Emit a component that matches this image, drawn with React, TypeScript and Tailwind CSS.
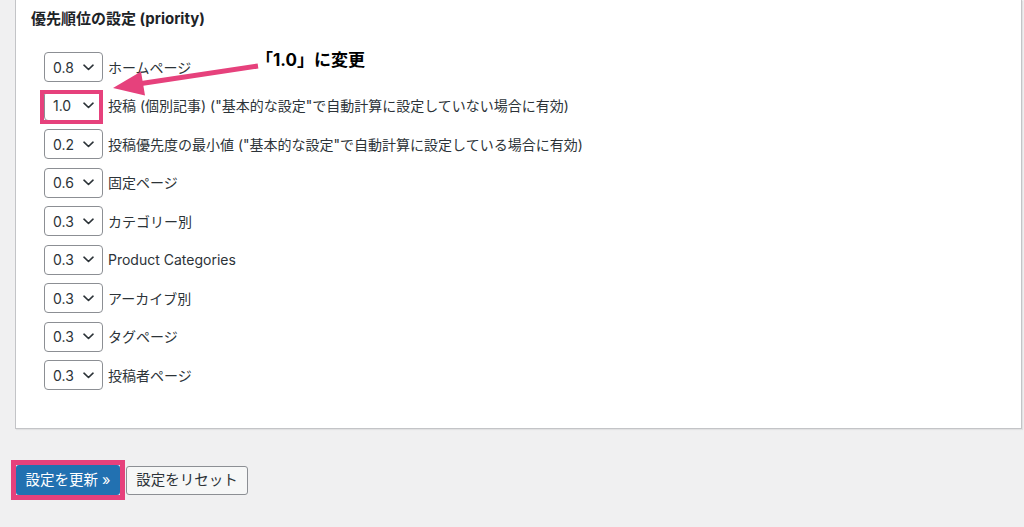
import React from "react";

const rows = [
  { value: "0.8", label: "ホームページ" },
  { value: "1.0", label: '投稿 (個別記事) ("基本的な設定"で自動計算に設定していない場合に有効)', marked: true },
  { value: "0.2", label: '投稿優先度の最小値 ("基本的な設定"で自動計算に設定している場合に有効)' },
  { value: "0.6", label: "固定ページ" },
  { value: "0.3", label: "カテゴリー別" },
  { value: "0.3", label: "Product Categories" },
  { value: "0.3", label: "アーカイブ別" },
  { value: "0.3", label: "タグページ" },
  { value: "0.3", label: "投稿者ページ" },
];

function Chevron() {
  return (
    <svg width="11" height="7" viewBox="0 0 11 7" fill="none">
      <path d="M1 1.2 L5.5 5.5 L10 1.2" stroke="#2c3338" strokeWidth="1.6" strokeLinecap="round" strokeLinejoin="round" />
    </svg>
  );
}

function PrioritySelect({ value, marked }: { value: string; marked?: boolean }) {
  return (
    <div className="relative">
      <div className="flex h-[30px] w-[59px] items-center justify-between rounded-[4px] border border-[#8c8f94] bg-white pl-[8px] pr-[8px] text-[14px] text-[#2c3338]">
        <span>{value}</span>
        <Chevron />
      </div>
      {marked && (
        <div className="absolute left-[-4px] top-[-1px] h-[34px] w-[63px] border-4 border-[#e6417c]" />
      )}
    </div>
  );
}

export default function App() {
  return (
    <div
      className="relative h-[527px] w-full overflow-hidden bg-[#f0f0f1]"
      style={{ fontFamily: 'Inter, "Noto Sans CJK JP", sans-serif' }}
    >
      <div className="ml-[15px] mr-[2px] h-[429px] border border-t-0 border-[#c3c4c7] bg-white shadow-[1px_1px_1px_rgba(0,0,0,0.06)]">
        <h3 className="pl-[15px] pt-[9px] text-[15px] font-bold leading-[20px] text-[#1d2327]">
          優先順位の設定 (priority)
        </h3>
        <div className="mt-[23px] flex flex-col gap-[8.5px] pl-[28px]">
          {rows.map((row, i) => (
            <div key={i} className="flex items-center gap-[5px]">
              <PrioritySelect value={row.value} marked={row.marked} />
              <span className="text-[14px] text-[#2c3338]">{row.label}</span>
            </div>
          ))}
        </div>
      </div>

      <div className="mt-[31px] ml-[11px] flex items-center gap-[1px]">
        <div className="border-[5px] border-[#e6417c]">
          <button className="h-[30px] w-[104px] rounded-[3px] bg-[#2271b1] text-[14.5px] text-white">
            設定を更新 »
          </button>
        </div>
        <button className="h-[29px] w-[122px] rounded-[3px] border border-[#8c8f94] bg-[#f6f7f7] text-[14.5px] text-[#2c3338]">
          設定をリセット
        </button>
      </div>

      {/* annotation arrow */}
      <svg className="absolute left-0 top-0" width="1024" height="527" viewBox="0 0 1024 527">
        <line x1="258" y1="66" x2="138" y2="84" stroke="#e6417c" strokeWidth="5" />
        <polygon points="113,88 145,95.5 141,71.5" fill="#e6417c" />
      </svg>
      <div className="absolute left-[256px] top-[48px] text-[17px] font-bold leading-[24px] text-black">
        「1.0」に変更
      </div>
    </div>
  );
}
